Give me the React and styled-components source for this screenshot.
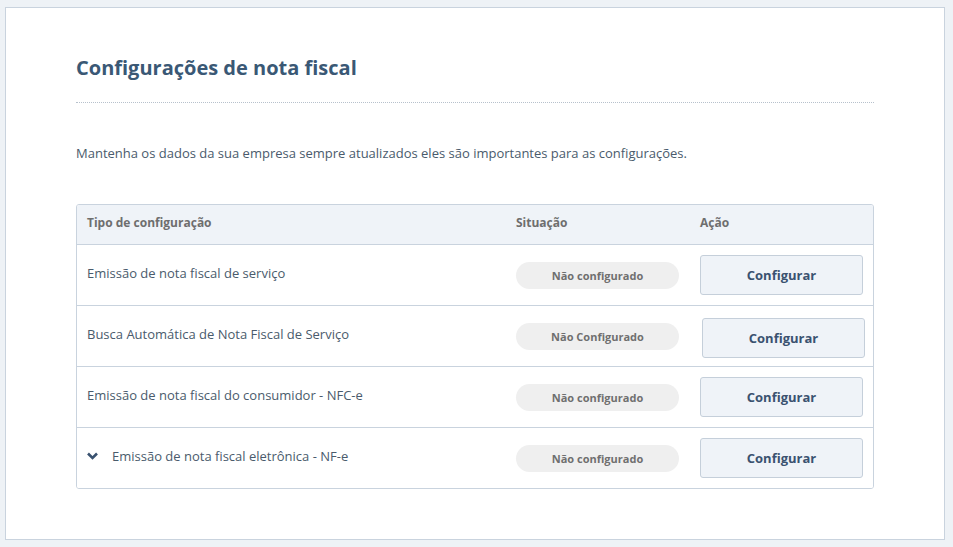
import styled, { createGlobalStyle } from "styled-components";

const GlobalStyle = createGlobalStyle`
  body {
    margin: 0;
    background: #eef2f6;
    font-family: "Open Sans", Lato, Arial, sans-serif;
  }
`;

const Page = styled.div`
  padding: 7px 8px 8px 5px;
`;

const Card = styled.div`
  background: #fff;
  border: 1px solid #c9d3de;
  height: 533px;
  box-sizing: border-box;
  padding: 47px 70px 0 70px;
`;

const Header = styled.div`
  border-bottom: 1px dotted #b7c1cc;
  padding-bottom: 21px;
`;

const Title = styled.h1`
  margin: 0;
  font-size: 20px;
  line-height: 26px;
  font-weight: 700;
  color: #3a5875;
`;

const Description = styled.p`
  margin: 41px 0 42px;
  font-size: 13px;
  line-height: 18px;
  color: #4a5b6c;
`;

const Table = styled.div`
  border: 1px solid #c9d3de;
  border-radius: 3px;
  overflow: hidden;
`;

const Row = styled.div`
  display: grid;
  grid-template-columns: 439px 184px 1fr;
  align-items: center;
  height: ${(p) => (p.head ? "39px" : "60px")};
  background: ${(p) => (p.head ? "#eff3f8" : "#fff")};
  border-top: ${(p) => (p.head ? "none" : "1px solid #c9d3de")};
`;

const HeadCell = styled.div`
  font-size: 12px;
  font-weight: 700;
  color: #6e6e6e;
  margin-top: -4px;
  padding-left: ${(p) => (p.first ? "10px" : "0")};
`;

const NameCell = styled.div`
  display: flex;
  align-items: center;
  gap: 14px;
  padding-left: 10px;
  font-size: 13px;
  color: #4a5b6c;
  margin-top: -4px;
`;

const Badge = styled.span`
  display: flex;
  align-items: center;
  justify-content: center;
  width: 163px;
  height: 27px;
  border-radius: 14px;
  background: #efefef;
  font-size: 11px;
  font-weight: 700;
  color: #6f6f6f;
`;

const Button = styled.button`
  width: 163px;
  height: 40px;
  box-sizing: border-box;
  border: 1px solid #c5cfda;
  border-radius: 3px;
  background: #eff3f8;
  font-family: inherit;
  font-size: 13px;
  font-weight: 700;
  color: #3a5270;
  cursor: pointer;
  margin-left: ${(p) => (p.nudge ? "2px" : "0")};
  margin-top: ${(p) => (p.nudge ? "4px" : "0")};
`;

const Chevron = () => (
  <svg width="11" height="8" viewBox="0 0 11 8">
    <path d="M1 1.5 L5.5 6 L10 1.5" fill="none" stroke="#3a5270" strokeWidth="2.6" />
  </svg>
);

const rows = [
  { name: "Emissão de nota fiscal de serviço", status: "Não configurado" },
  { name: "Busca Automática de Nota Fiscal de Serviço", status: "Não Configurado", nudge: true },
  { name: "Emissão de nota fiscal do consumidor - NFC-e", status: "Não configurado" },
  { name: "Emissão de nota fiscal eletrônica - NF-e", status: "Não configurado", expandable: true },
];

export default function App() {
  return (
    <>
      <GlobalStyle />
      <Page>
        <Card>
          <Header>
            <Title>Configurações de nota fiscal</Title>
          </Header>
          <Description>
            Mantenha os dados da sua empresa sempre atualizados eles são importantes para as configurações.
          </Description>
          <Table>
            <Row head>
              <HeadCell first>Tipo de configuração</HeadCell>
              <HeadCell>Situação</HeadCell>
              <HeadCell>Ação</HeadCell>
            </Row>
            {rows.map((r) => (
              <Row key={r.name}>
                <NameCell>
                  {r.expandable && <Chevron />}
                  {r.name}
                </NameCell>
                <div>
                  <Badge>{r.status}</Badge>
                </div>
                <div>
                  <Button nudge={r.nudge}>Configurar</Button>
                </div>
              </Row>
            ))}
          </Table>
        </Card>
      </Page>
    </>
  );
}
